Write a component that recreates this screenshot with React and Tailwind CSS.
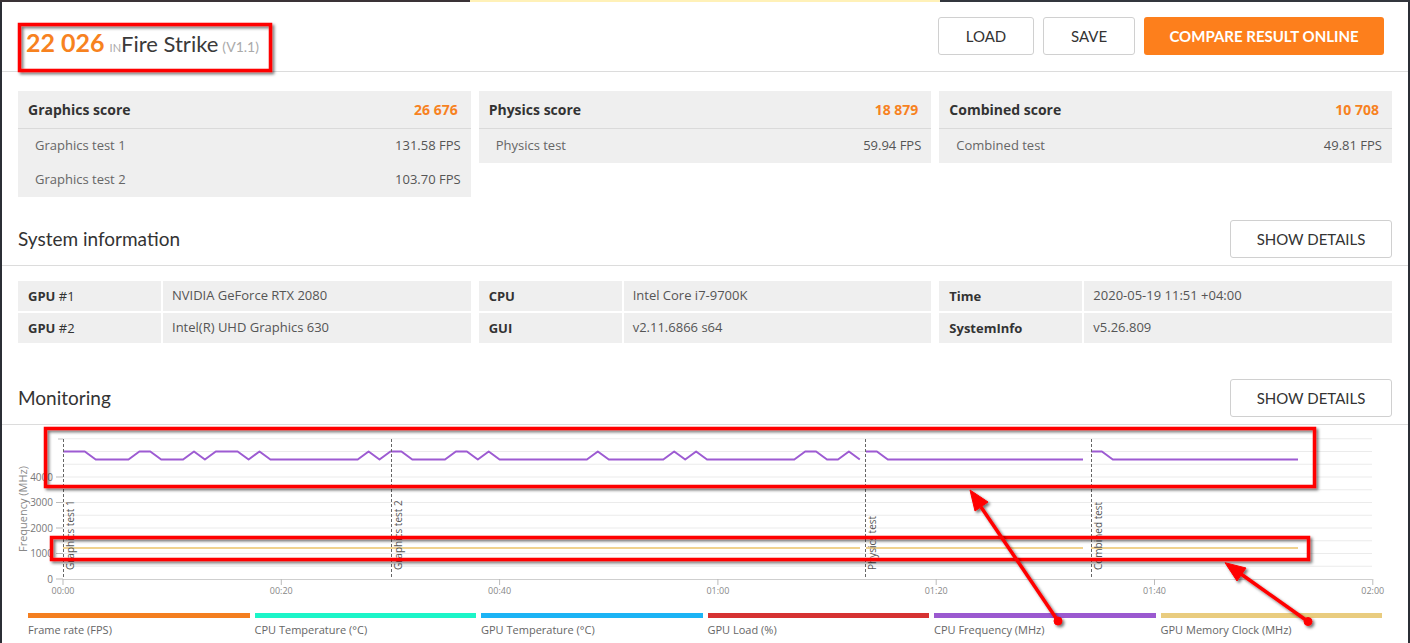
import React from 'react';

const H = 452.5;
const L = 460.5;
const STEP = 10.915;

const seq1 =
  'HHH' + 'LLLL' + 'HH' + 'LLL' + 'H' + 'L' + 'HHH' + 'L' + 'H' + 'LLLLLLLLL' + 'H' + 'L' + 'HH' + 'LLLL' +
  'HH' + 'L' + 'H' + 'LLLLLLLLL' + 'H' + 'LLLLLL' + 'H' + 'L' + 'H' + 'LLLLLLLLL' + 'HH' + 'LL' + 'H' + 'L';

const toPoints = (x0, seq, endX) => {
  const pts = seq.split('').map((c, i) => [x0 + i * STEP, c === 'H' ? H : L]);
  if (endX) pts.push([endX, L]);
  return pts.map(([x, y]) => `${x.toFixed(1)},${y}`).join(' ');
};

const cpuSegments = [
  toPoints(63, seq1),
  toPoints(866, 'HH' + 'L'.repeat(18), 1083),
  toPoints(1091, 'HH' + 'L'.repeat(17), 1298),
];

const memSegments = [
  [63, 860],
  [866, 1083],
  [1091, 1298],
];

const tests = [
  { x: 63, label: 'Graphics test 1' },
  { x: 391, label: 'Graphics test 2' },
  { x: 865, label: 'Physics test' },
  { x: 1091, label: 'Combined test' },
];

const times = ['00:00', '00:20', '00:40', '01:00', '01:20', '01:40', '02:00'];

const legend = [
  { label: 'Frame rate (FPS)', color: 'bg-[#f47f20]' },
  { label: 'CPU Temperature (°C)', color: 'bg-[#1cf5c8]' },
  { label: 'GPU Temperature (°C)', color: 'bg-[#1cb4f5]' },
  { label: 'GPU Load (%)', color: 'bg-[#d63232]' },
  { label: 'CPU Frequency (MHz)', color: 'bg-[#9b59d0]' },
  { label: 'GPU Memory Clock (MHz)', color: 'bg-[#e9cc7f]' },
];

const scores = [
  {
    title: 'Graphics score',
    score: '26 676',
    rows: [
      ['Graphics test 1', '131.58 FPS'],
      ['Graphics test 2', '103.70 FPS'],
    ],
  },
  { title: 'Physics score', score: '18 879', rows: [['Physics test', '59.94 FPS']] },
  { title: 'Combined score', score: '10 708', rows: [['Combined test', '49.81 FPS']] },
];

const sysInfo = [
  [
    [['GPU', '#1'], 'NVIDIA GeForce RTX 2080'],
    [['GPU', '#2'], 'Intel(R) UHD Graphics 630'],
  ],
  [
    [['CPU', ''], 'Intel Core i7-9700K'],
    [['GUI', ''], 'v2.11.6866 s64'],
  ],
  [
    [['Time', ''], '2020-05-19 11:51 +04:00'],
    [['SystemInfo', ''], 'v5.26.809'],
  ],
];

const OutlineButton = ({ children, className = '' }) => (
  <button
    className={`h-[38px] border border-[#d0d0d0] rounded-[3px] bg-white font-[Lato] text-[15px] text-[#333] ${className}`}
  >
    {children}
  </button>
);

const SectionHeader = ({ title }) => (
  <div className="flex items-center justify-between px-4 pb-[7px] border-b border-[#dcdcdc]">
    <h2 className="font-[Lato] text-[19px] text-[#333]">{title}</h2>
    <OutlineButton className="w-[162px]">SHOW DETAILS</OutlineButton>
  </div>
);

const ScorePanel = ({ panel }) => (
  <div className="bg-[#efefef] self-start">
    <div className="h-[38px] flex items-center justify-between pl-[10px] pr-[13px] border-b border-[#dadada]">
      <span className="text-[14px] font-bold text-[#333]">{panel.title}</span>
      <span className="text-[14px] font-bold text-[#f7821f]">{panel.score}</span>
    </div>
    {panel.rows.map(([name, val]) => (
      <div key={name} className="h-[34px] flex items-center justify-between pl-[17px] pr-[10px] text-[13px]">
        <span className="text-[#666]">{name}</span>
        <span className="text-[#555]">{val}</span>
      </div>
    ))}
  </div>
);

const Chart = () => (
  <svg width="1406" height="188" viewBox="2 426 1406 188" className="block" fontFamily="'Open Sans', sans-serif">
    {Array.from({ length: 11 }).map((_, k) => {
      const y = 580 - (k + 1) * 12.75;
      return <line key={k} x1="63" x2="1372" y1={y} y2={y} stroke="#ebebeb" strokeWidth="1" />;
    })}
    <line x1="63" x2="1372" y1="580.5" y2="580.5" stroke="#cfcfcf" strokeWidth="1" />
    {[0, 1000, 2000, 3000, 4000].map((v) => {
      const y = 580 - (v / 1000) * 25.5;
      return (
        <g key={v}>
          <line x1="56" x2="63" y1={y} y2={y} stroke="#bbb" />
          <text x="53" y={y + 3.5} textAnchor="end" fontSize="10" fill="#777">
            {v}
          </text>
        </g>
      );
    })}
    <line x1="58" x2="63" y1="440" y2="440" stroke="#bbb" />
    <text x="27" y="510" transform="rotate(-90 27 510)" textAnchor="middle" fontSize="11" fill="#888">
      Frequency (MHz)
    </text>
    {times.map((t, k) => {
      const x = 63 + k * 218.3;
      return (
        <g key={t}>
          <line x1={x} x2={x} y1="580" y2="586" stroke="#bbb" />
          <text x={x} y="595" textAnchor="middle" fontSize="9" fill="#888">
            {t}
          </text>
        </g>
      );
    })}
    {memSegments.map(([a, b]) => (
      <line key={a} x1={a} x2={b} y1="549" y2="549" stroke="#f0d28e" strokeWidth="2" />
    ))}
    {cpuSegments.map((pts, i) => (
      <polyline key={i} points={pts} fill="none" stroke="#9d5bd2" strokeWidth="2" strokeLinejoin="round" />
    ))}
    {tests.map((t) => (
      <g key={t.label}>
        <line x1={t.x + 0.5} x2={t.x + 0.5} y1="440" y2="580" stroke="#666" strokeDasharray="3 2" />
        <text
          x={t.x + 11}
          y="571"
          transform={`rotate(-90 ${t.x + 11} 571)`}
          fontSize="10"
          fill="#555"
        >
          {t.label}
        </text>
      </g>
    ))}
  </svg>
);

const Annotations = () => (
  <svg width="1410" height="643" className="absolute inset-0 pointer-events-none">
    <defs>
      <filter id="shadow" x="-5%" y="-20%" width="110%" height="140%">
        <feDropShadow dx="2" dy="2" stdDeviation="1.6" floodColor="#000" floodOpacity="0.55" />
      </filter>
    </defs>
    <g filter="url(#shadow)" fill="none" stroke="#ff0000" strokeWidth="3.5">
      <rect x="19.5" y="24.5" width="251" height="46" />
      <rect x="45.5" y="428.5" width="1269" height="58" />
      <rect x="51.5" y="537.5" width="1257" height="22" />
    </g>
    <g filter="url(#shadow)" fill="#ff0000" stroke="#ff0000">
      <line x1="1058" y1="621" x2="981" y2="507" strokeWidth="3.5" />
      <polygon points="970,490 988,502 975,511" strokeWidth="1" />
      <circle cx="1058" cy="621" r="4" />
      <line x1="1308" y1="621.5" x2="1241" y2="574" strokeWidth="3.5" />
      <polygon points="1225,562.7 1246,568 1237,581" strokeWidth="1" />
      <circle cx="1308" cy="621.5" r="4" />
    </g>
  </svg>
);

export default function App() {
  return (
    <div className="relative w-[1410px] h-[643px] overflow-hidden bg-[#2b2e35] font-['Open_Sans',sans-serif]">
      <div className="flex h-[2px]">
        <div className="w-[470px] bg-[#3a3336]" />
        <div className="w-[470px] bg-[#fff1b8]" />
        <div className="flex-1 bg-[#33363d]" />
      </div>
      <div className="mx-[2px] h-[641px] bg-white">
        <header className="h-[70px] flex items-start justify-between px-6 border-b border-[#dcdcdc]">
          <div className="flex items-baseline mt-[28px]">
            <span className="font-[Lato] font-bold text-[25px] leading-none text-[#f7821f]">22 026</span>
            <span className="font-[Lato] text-[11px] text-[#aaa] ml-[5px]">IN</span>
            <span className="font-[Lato] text-[22px] leading-none text-[#3a3a3a]">Fire Strike</span>
            <span className="font-[Lato] text-[14px] text-[#aaa] ml-[4px]">(V1.1)</span>
          </div>
          <div className="flex gap-[9px] mt-[15px]">
            <OutlineButton className="w-[96px]">LOAD</OutlineButton>
            <OutlineButton className="w-[92px]">SAVE</OutlineButton>
            <button className="w-[240px] h-[38px] rounded-[3px] bg-[#fd7f1c] font-[Lato] font-bold text-[15px] text-white">
              COMPARE RESULT ONLINE
            </button>
          </div>
        </header>

        <div className="grid grid-cols-3 gap-2 px-4 mt-[19px] h-[106px]">
          {scores.map((p) => (
            <ScorePanel key={p.title} panel={p} />
          ))}
        </div>

        <div className="pt-[23px]">
          <SectionHeader title="System information" />
        </div>

        <div className="grid grid-cols-3 gap-2 px-4 mt-[15px]">
          {sysInfo.map((group, gi) => (
            <div key={gi} className="flex flex-col gap-[2px]">
              {group.map(([[bold, rest], val]) => (
                <div key={bold + rest} className="grid grid-cols-[143px_1fr] gap-[2px] h-[30px] text-[13px]">
                  <div className="bg-[#efefef] pl-[10px] leading-[30px] text-[#333]">
                    <span className="font-bold">{bold}</span>
                    {rest && <span> {rest}</span>}
                  </div>
                  <div className="bg-[#efefef] flex items-center pl-[9px] text-[#555]">{val}</div>
                </div>
              ))}
            </div>
          ))}
        </div>

        <div className="pt-[36px]">
          <SectionHeader title="Monitoring" />
        </div>

        <Chart />

        <div className="grid grid-cols-6 gap-[5px] px-[26px]">
          {legend.map((l) => (
            <div key={l.label}>
              <div className={`h-[5px] ${l.color}`} />
              <div className="mt-[4px] text-[11px] text-[#666]">{l.label}</div>
            </div>
          ))}
        </div>
      </div>
      <Annotations />
    </div>
  );
}
